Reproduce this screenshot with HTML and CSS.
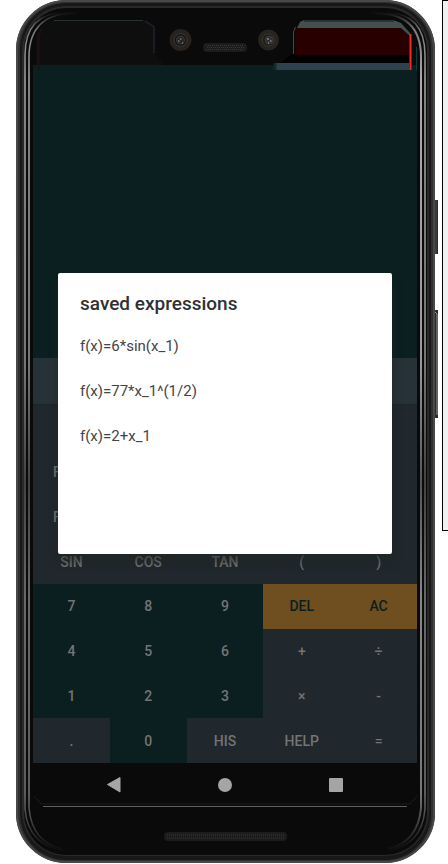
FILE: index.html
```
<!DOCTYPE html>
<html lang="en">
<head>
<meta charset="utf-8">
<meta name="viewport" content="width=device-width, initial-scale=1">
<title>Calculator</title>
<link rel="stylesheet" href="styles.css">
</head>
<body>
<main class="phone">
  <svg class="frame" viewBox="16 0 419 863" preserveAspectRatio="none" aria-hidden="true">
    <defs>
      <linearGradient id="rail" gradientUnits="userSpaceOnUse" x1="0" y1="12" x2="0" y2="852">
        <stop offset="0" stop-color="#0a0a0a"/><stop offset=".02" stop-color="#777"/><stop offset=".08" stop-color="#aaa"/>
        <stop offset=".42" stop-color="#999"/><stop offset=".56" stop-color="#555"/><stop offset=".7" stop-color="#888"/>
        <stop offset=".93" stop-color="#777"/><stop offset="1" stop-color="#0a0a0a"/>
      </linearGradient>
      <linearGradient id="side" x1="0" y1="0" x2="1" y2="0">
        <stop offset="0" stop-color="#222"/><stop offset=".5" stop-color="#444"/><stop offset="1" stop-color="#222"/>
      </linearGradient>
    </defs>
    <path d="M434 200h4v54h-4z" fill="url(#side)"/>
    <path d="M434 310h4v108h-4z" fill="#2a2a2a"/>
    <path d="M435 312l2 2v101" fill="none" stroke="#999"/>
    <rect x="16" y="0" width="419" height="863" rx="50" fill="#303030"/>
    <rect x="17" y="1" width="417" height="861" rx="49" fill="none" stroke="#484848" stroke-width="2"/>
    <rect x="20" y="3" width="411" height="857" rx="46" fill="#181818"/>
    <rect x="22" y="6" width="407" height="850" rx="44" fill="#292929"/>
    <rect x="24" y="8" width="403" height="847" rx="42" fill="#0a0a0a"/>
    <path d="M80 12H66Q25 13 25 55V809Q28 846 66 851" fill="none" stroke="url(#rail)" stroke-width="1.500"/>
    <path d="M76 13Q29 13 29 57V808Q32 842 62 849" fill="none" stroke="url(#rail)" stroke-width="1.500"/>
    <path d="M371 12h14Q425 13 425 55V809Q422 846 386 851" fill="none" stroke="url(#rail)" stroke-width="1.500"/>
    <path d="M375 13Q421 13 421 57V808Q418 842 388 849" fill="none" stroke="url(#rail)" stroke-width="2"/>
    <path d="M34 796l7 8h369l7-8" fill="none" stroke="#1d1d1d"/>
    <path d="M43 806.500H407" stroke="#606060"/>
    <rect x="164" y="832" width="123" height="9" rx="4" fill="#1c1c1c"/>
    <path d="M167 835H284M167 838H284" stroke="#2b2b2b" stroke-width="2" stroke-dasharray="1 1"/>
  </svg>
  <div class="content">
    <svg class="sensors" viewBox="33 0 384 65" preserveAspectRatio="none" aria-hidden="true">
      <path d="M36 65V37Q40 21 54 20H143L154 29V53L165 65z" fill="#0e0e0e"/>
      <path d="M54 20.500H143" stroke="#263331"/>
      <path d="M145 21l9 6v26" fill="none" stroke="#1c1b2a" stroke-width="2"/>
      <path d="M38.500 70V36l4-8" fill="none" stroke="#1c1110" stroke-width="2"/>
      <path d="M280 63l14-10h115v10z" fill="#000"/>
      <path d="M297 27h106l6 7v21H295V30z" fill="#290000"/>
      <path d="M304 20h89l8 3 9 10v3l-9-8H297l3-6z" fill="#435050"/>
      <path d="M304 21H394" stroke="#283330" stroke-width="2"/>
      <path d="M293.500 54V32l2-5" fill="none" stroke="#46484a"/>
      <path d="M275 63H409V70H275z" fill="#2f414d"/>
      <path d="M275 63v7" stroke="#18292e" stroke-width="3"/>
      <path d="M410.500 34V70" stroke="#f02b24" stroke-width="2"/>
      <path d="M416.500 47V70" stroke="#073d3b"/>
      <circle cx="180.500" cy="40" r="11" fill="#29231e"/>
      <circle cx="180.500" cy="40" r="6.500" fill="#161616" stroke="#3a3835"/>
      <circle cx="180.500" cy="40" r="4" fill="#252525" stroke="#3c3c3c"/>
      <path d="M180 39h1.500M178 41h1.500M182 43h1" stroke="#aaa294" stroke-width="1.200"/>
      <circle cx="268.500" cy="40" r="10.500" fill="#29231e"/>
      <circle cx="268.500" cy="40" r="6" fill="#181818" stroke="#3a3835"/>
      <circle cx="269" cy="40" r="4" fill="#303030" stroke="#3c3c3c"/>
      <path d="M267 39h2M270 41h1.500M268 43h1" stroke="#aaa" stroke-width="1.200"/>
      <rect x="203" y="43" width="44" height="9" rx="4" fill="#1c1c1c"/>
      <path d="M206 45.500H244M207 47.500H244M206 49.500H244" stroke="#383838" stroke-dasharray="1 1"/>
    </svg>
    <section class="screen">
      <div class="display"></div>
      <div class="band"></div>
      <div class="keys">
        <button class="key lead partial">F</button>
        <button class="key lead partial">F</button>
        <button class="key lead">SIN</button><button class="key">COS</button><button class="key">TAN</button><button class="key">(</button><button class="key">)</button>
        <button class="key digit">7</button><button class="key digit">8</button><button class="key digit">9</button><button class="key accent">DEL</button><button class="key accent">AC</button>
        <button class="key digit">4</button><button class="key digit">5</button><button class="key digit">6</button><button class="key">+</button><button class="key">÷</button>
        <button class="key digit">1</button><button class="key digit">2</button><button class="key digit">3</button><button class="key">×</button><button class="key">-</button>
        <button class="key">.</button><button class="key digit">0</button><button class="key">HIS</button><button class="key">HELP</button><button class="key">=</button>
      </div>
      <div class="dialog" role="dialog" aria-labelledby="dialog-title">
        <h1 class="title" id="dialog-title">saved expressions</h1>
        <ul class="list">
          <li><button class="item">f(x)=6*sin(x_1)</button></li>
          <li><button class="item">f(x)=77*x_1^(1/2)</button></li>
          <li><button class="item">f(x)=2+x_1</button></li>
        </ul>
      </div>
    </section>
    <nav class="nav">
      <button class="nav-button" aria-label="Back"><svg width="16" height="16" viewBox="0 0 16 16"><path d="M1.500 7.500L14 .5V15z" fill="#a5a5a5" stroke="#a5a5a5" stroke-linejoin="round"/></svg></button>
      <button class="nav-button" aria-label="Home"><svg width="16" height="16" viewBox="0 0 16 16"><circle cx="8" cy="8" r="7" fill="#a5a5a5"/></svg></button>
      <button class="nav-button" aria-label="Recent"><svg width="16" height="16" viewBox="0 0 16 16"><rect x="1" y="1" width="14" height="14" rx="1" fill="#a5a5a5"/></svg></button>
    </nav>
  </div>
</main>
<aside class="panel"></aside>
</body>
</html>
```
FILE: styles.css
```
* { box-sizing: border-box; }

body {
  margin: 0;
  padding-left: 16px;
  display: flex;
  align-items: flex-start;
  gap: 7px;
  background: #fff;
  font-family: Roboto, sans-serif;
}

button {
  margin: 0;
  padding: 0;
  border: 0;
  background: none;
  font: inherit;
  color: inherit;
}

.phone {
  flex: 1;
  display: grid;
}

.frame {
  grid-area: 1 / 1;
  width: 100%;
  height: 100%;
  overflow: visible;
}

.content {
  grid-area: 1 / 1;
  display: flex;
  flex-direction: column;
  padding: 0 18px 56px 17px;
}

.sensors {
  width: 100%;
  height: 65px;
  overflow: visible;
  z-index: 1;
}

.screen {
  position: relative;
  background: #20272d;
}

.display {
  height: 293px;
  background: #0b1f20;
}

.band {
  height: 47px;
  background: #273238;
  border-bottom: 1px solid #1e2526;
}

.keys {
  display: grid;
  grid-template-columns: repeat(5, 1fr);
  grid-template-rows: repeat(8, 1fr);
  height: 358px;
  color: #737474;
  font-size: 14px;
  font-weight: 500;
}

/* Empty first row of the keypad */
.keys::before {
  content: "";
  grid-column: 1 / -1;
}

.lead { grid-column: 1; }

.partial {
  padding-left: 20px;
  text-align: left;
}

.digit { background: #0b1f20; }

.accent {
  background: #6f4e20;
  color: #0b1f20;
}

.dialog {
  position: absolute;
  top: 208px;
  left: 25px;
  right: 25px;
  min-height: 281px;
  padding: 20px 22px;
  border-radius: 2px;
  background: #fff;
  color: #303030;
  box-shadow: 0 8px 8px #20262299;
}

.title {
  margin: 0 0 8px;
  font-size: 19px;
  font-weight: 500;
  line-height: 22px;
}

.list {
  margin: 0;
  padding: 0;
  list-style: none;
}

.item {
  display: block;
  width: 100%;
  height: 45px;
  text-align: left;
  font-size: 15px;
  color: #444;
}

.nav {
  display: grid;
  grid-template-columns: repeat(3, 1fr);
  height: 44px;
  padding: 0 25px;
}

.nav-button {
  display: grid;
  place-items: center;
}

.panel {
  width: 6px;
  height: 531px;
  border: 1px solid #000;
  border-right: 0;
  background: #f0f0f0;
}
```
